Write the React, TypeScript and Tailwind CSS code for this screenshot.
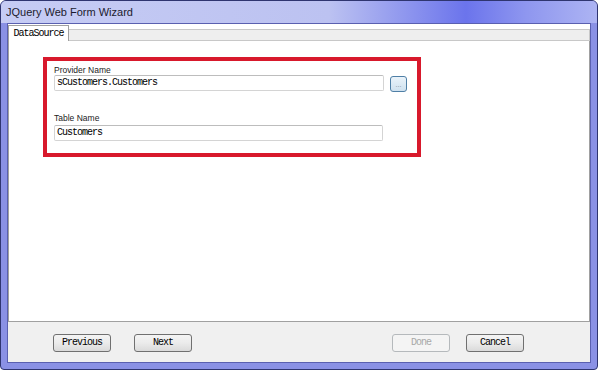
import React from 'react';

const mono = { fontFamily: '"Liberation Mono", "DejaVu Sans Mono", monospace' };

const WizardButton: React.FC<{ label: string; disabled?: boolean; className?: string }> = ({ label, disabled, className = '' }) => (
  <button
    disabled={disabled}
    style={mono}
    className={`${className} w-[58px] h-[18px] shrink-0 flex items-center justify-center rounded-[3px] border text-[10px] tracking-[-1px] leading-none ${disabled
      ? 'border-[#b5b9bc] bg-[#f4f4f4] text-[#a8a8a8]'
      : 'border-[#707070] bg-[linear-gradient(180deg,#f4f4f4_0%,#ebebeb_50%,#dadada_100%)] text-black font-medium'
      }`}
  >
    {label}
  </button>
);

const Field: React.FC<{ value: string; width: string }> = ({ value, width }) => (
  <div
    className={`${width} h-[16px] border border-[#d4d4d4] border-t-[#bdbdbd] bg-white rounded-[2px] flex items-center pl-[2px]`}
  >
    <span style={mono} className="text-[10px] tracking-[-1px] text-black leading-none">
      {value}
    </span>
  </div>
);

export default function App() {
  return (
    <div className="w-[598px] h-[370px] flex flex-col bg-[#8a91e5] border border-[#2f3570] rounded-t-[6px] rounded-b-[4px] overflow-hidden">
      {/* Title bar */}
      <div className="h-[22px] shrink-0 flex items-center pl-[5px] bg-[linear-gradient(90deg,#c6ccf4_0%,#bcc2f1_55%,#6b74ec_78%,#8e96ef_88%,#adb4f3_100%)]">
        <span
          className="text-[11px] text-[#1b1b2e]"
          style={{ fontFamily: '"Liberation Sans", Arial, sans-serif' }}
        >
          JQuery Web Form Wizard
        </span>
      </div>

      {/* Client area */}
      <div className="flex-1 flex flex-col mx-[6px] mb-[6px] bg-[#f0f0f0] border border-[#5a60b0]">
        {/* Tab strip */}
        <div className="h-[17px] shrink-0 flex items-end bg-white">
          <div
            style={mono}
            className="h-[16px] w-[61px] border border-b-0 border-[#a0a0a0] bg-white flex items-center justify-center text-[10px] tracking-[-1px] text-black font-medium"
          >
            DataSource
          </div>
          <div className="flex-1 h-[12px] bg-[#eeeeee] border-t border-b border-r border-[#c8c8c8]" />
        </div>

        {/* Page */}
        <div className="flex-1 bg-white border-l border-r border-b border-[#a0a0a0] pt-[16px] pl-[34px]">
          <div
            className="w-[378px] h-[100px] border-[4px] border-[#d8192c] pl-[7px] pt-[4px]"
            style={{ fontFamily: '"Liberation Sans", Arial, sans-serif' }}
          >
            <div className="text-[8.5px] leading-[10px] text-[#222]">Provider Name</div>
            <div className="flex items-start gap-[6px]">
              <Field value="sCustomers.Customers" width="w-[330px]" />
              <div className="mt-[1px] w-[17px] h-[16px] rounded-[3px] border border-[#4f7fa6] bg-[linear-gradient(180deg,#eaf3fa_0%,#cfe1ef_100%)] flex items-center justify-center text-[7px] leading-none text-[#7c8a96]">
                ...
              </div>
            </div>
            <div className="mt-[21px] text-[8.5px] leading-[10px] text-[#222]">Table Name</div>
            <div className="mt-[2px]">
              <Field value="Customers" width="w-[329px]" />
            </div>
          </div>
        </div>

        {/* Button bar */}
        <div className="h-[40px] shrink-0 flex items-center pl-[45px] pr-[66px] pt-[2px]">
          <WizardButton label="Previous" />
          <WizardButton label="Next" className="ml-[23px]" />
          <WizardButton label="Done" disabled className="ml-auto" />
          <WizardButton label="Cancel" className="ml-[16px]" />
        </div>
      </div>
    </div>
  );
}
